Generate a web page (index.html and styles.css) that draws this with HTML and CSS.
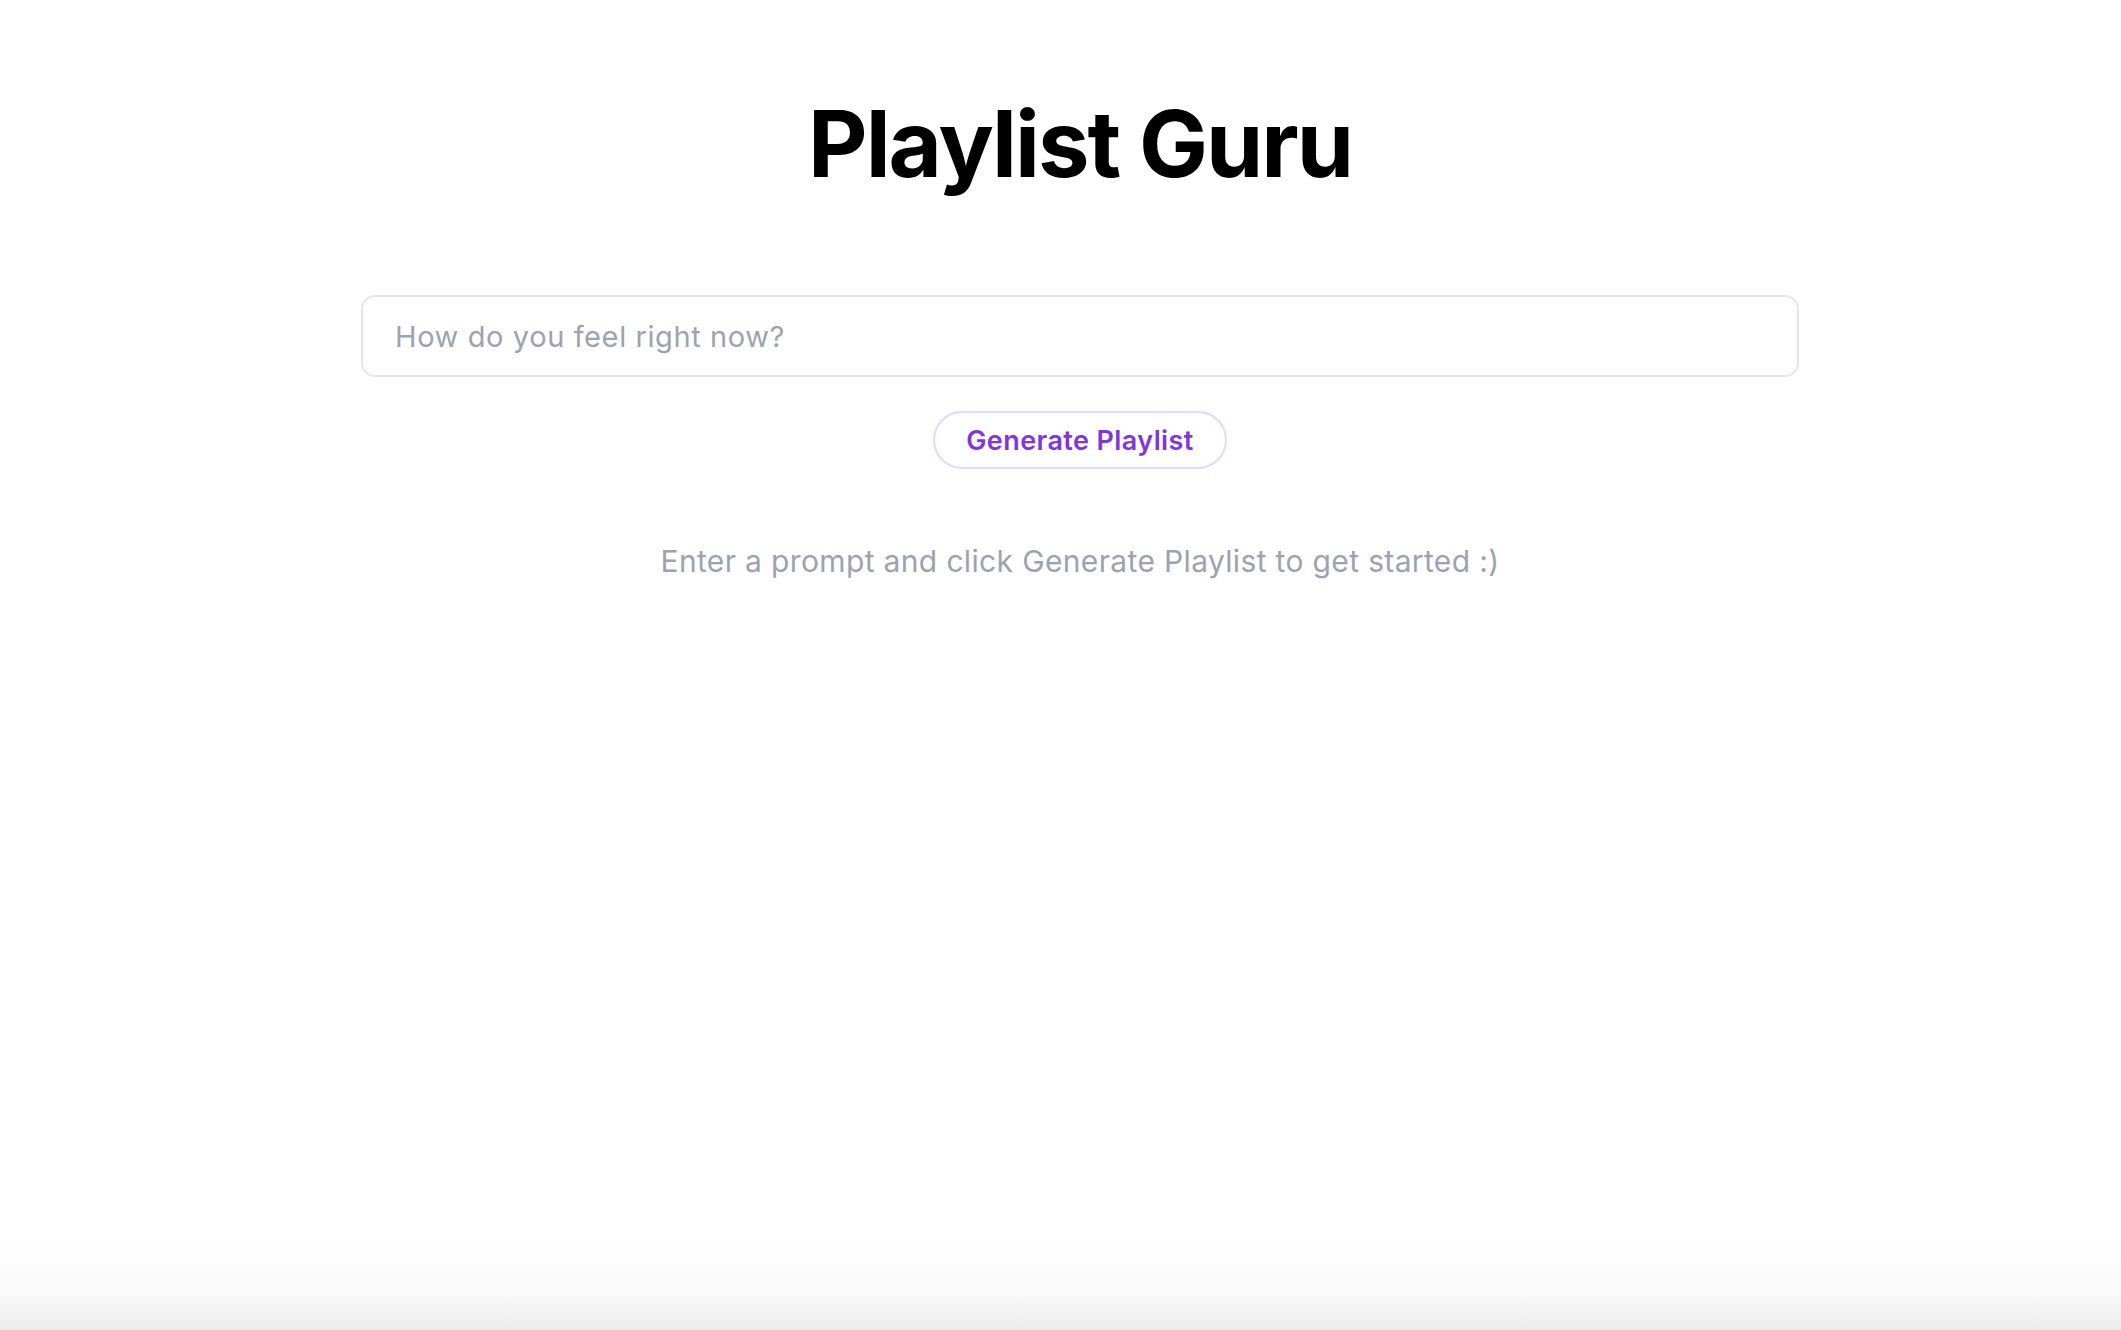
FILE: index.html
```html
<!DOCTYPE html>
<html lang="en">
<head>
<meta charset="utf-8">
<title>Playlist Guru</title>
<link rel="stylesheet" href="styles.css">
</head>
<body>
<main class="page">
  <h1 class="title">Playlist Guru</h1>
  <div class="prompt">
    <input class="prompt-input" type="text" placeholder="How do you feel right now?">
  </div>
  <button class="generate-btn" type="button">Generate Playlist</button>
  <p class="hint">Enter a prompt and click Generate Playlist to get started :)</p>
</main>
</body>
</html>
```
FILE: styles.css
```css
html, body {
  margin: 0;
  padding: 0;
  height: 100%;
}
body {
  font-family: Inter, "Liberation Sans", sans-serif;
  background: linear-gradient(to bottom, #ffffff 0, #ffffff calc(100% - 90px), #fafafa calc(100% - 40px), #ebebeb 100%);
  color: #000;
}
.page {
  box-sizing: border-box;
  min-height: 100%;
  padding: 88px 0 0 39px;
  display: flex;
  flex-direction: column;
  align-items: center;
}
.title {
  margin: 0;
  font-size: 92px;
  font-weight: 700;
  line-height: 112px;
  letter-spacing: -2px;
}
.prompt {
  margin-top: 95px;
  width: 1438px;
}
.prompt-input {
  box-sizing: border-box;
  width: 100%;
  height: 82px;
  border: 2px solid #e5e7eb;
  border-radius: 14px;
  padding: 0 32px;
  font-family: inherit;
  font-size: 29px;
  letter-spacing: 0.6px;
  color: #111827;
  background: #fff;
  outline: none;
}
.prompt-input::placeholder {
  color: #9ca3af;
}
.generate-btn {
  margin-top: 34px;
  box-sizing: border-box;
  width: 294px;
  height: 58px;
  border: 2px solid #e6d6fc;
  border-radius: 999px;
  background: #fff;
  color: #8235d9;
  font-family: inherit;
  font-size: 27px;
  font-weight: 600;
  letter-spacing: 0.4px;
  cursor: pointer;
}
.hint {
  margin: 74px 0 0;
  font-size: 30px;
  line-height: 36px;
  letter-spacing: 0.35px;
  color: #9ca3af;
}
```
